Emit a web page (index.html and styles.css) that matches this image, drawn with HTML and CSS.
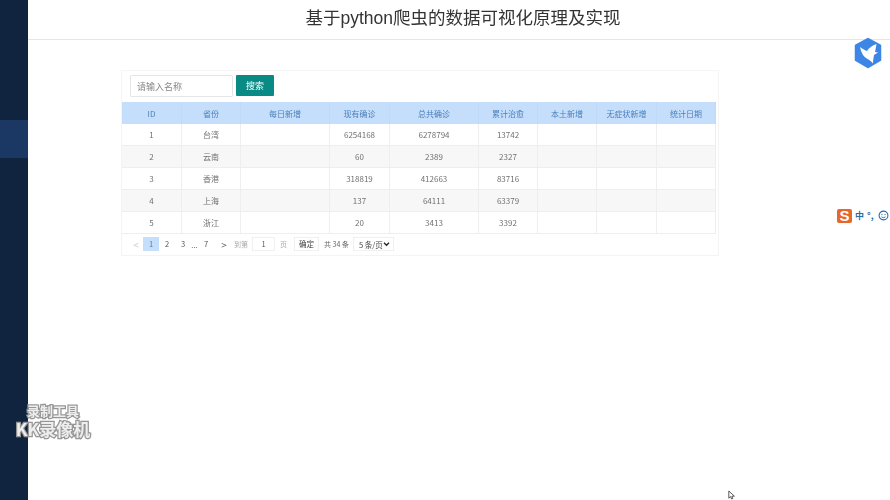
FILE: index.html
```html
<!DOCTYPE html>
<html lang="zh">
<head>
<meta charset="utf-8">
<title>基于python爬虫的数据可视化原理及实现</title>
<link rel="stylesheet" href="styles.css">
</head>
<body>
<div class="app">
  <aside class="sidebar">
    <div class="side-active"></div>
  </aside>
  <main class="main">
    <header class="header"><h1>基于python爬虫的数据可视化原理及实现</h1></header>
    <section class="card">
      <div class="search">
        <input class="search-input" type="text" placeholder="请输入名称">
        <button class="search-btn">搜索</button>
      </div>
      <table class="data">
        <colgroup>
          <col class="c60"><col class="c59"><col class="c89"><col class="c60"><col class="c89"><col class="c59"><col class="c59"><col class="c60"><col class="c59">
        </colgroup>
        <thead>
          <tr><th>ID</th><th>省份</th><th>每日新增</th><th>现有确诊</th><th>总共确诊</th><th>累计治愈</th><th>本土新增</th><th>无症状新增</th><th>统计日期</th></tr>
        </thead>
        <tbody>
          <tr><td>1</td><td>台湾</td><td></td><td>6254168</td><td>6278794</td><td>13742</td><td></td><td></td><td></td></tr>
          <tr><td>2</td><td>云南</td><td></td><td>60</td><td>2389</td><td>2327</td><td></td><td></td><td></td></tr>
          <tr><td>3</td><td>香港</td><td></td><td>318819</td><td>412663</td><td>83716</td><td></td><td></td><td></td></tr>
          <tr><td>4</td><td>上海</td><td></td><td>137</td><td>64111</td><td>63379</td><td></td><td></td><td></td></tr>
          <tr><td>5</td><td>浙江</td><td></td><td>20</td><td>3413</td><td>3392</td><td></td><td></td><td></td></tr>
        </tbody>
      </table>
      <div class="pager">
        <span class="pg-arrow muted">&lt;</span>
        <span class="pg-num active">1</span>
        <span class="pg-num">2</span>
        <span class="pg-num">3</span>
        <span class="pg-dots">...</span>
        <span class="pg-num">7</span>
        <span class="pg-arrow next">&gt;</span>
        <span class="pg-label first">到第</span>
        <span class="pg-box">1</span>
        <span class="pg-label second">页</span>
        <span class="pg-ok">确定</span>
        <span class="pg-total">共 34 条</span>
        <span class="pg-size">5 条/页
          <svg class="pg-chevron" viewBox="0 0 8 6" width="7" height="5" aria-hidden="true"><path d="M1 1 L4 4 L7 1" fill="none" stroke="#222" stroke-width="1.600"/></svg>
        </span>
      </div>
    </section>
  </main>
</div>

<svg class="bird" viewBox="0 0 30 32" width="30" height="32" aria-hidden="true">
  <path d="M15 2 L27 8.500 V23 L15 30 L3 23 V8.500 Z" fill="#3d86e6" stroke="#3d86e6" stroke-width="2.500" stroke-linejoin="round"/>
  <path d="M7 10 C10 12 12 13.500 14 14 C16 11 19 8.500 23.500 7 C23 10 22.500 12.500 22 15 L25 15.500 L21 18 C20.500 21 20 24 20 26.500 C18.500 24.500 16.500 23 14.500 22 C10.500 20 8 15 7 10 Z" fill="#fff"/>
</svg>

<div class="ime">
  <span class="ime-s">S</span><span class="ime-zh">中</span><span class="ime-dot">°,</span>
  <svg class="ime-face" viewBox="0 0 12 12" width="11" height="11" aria-hidden="true">
    <circle cx="6" cy="6" r="4.800" fill="none" stroke="#2b6ca8" stroke-width="1.200"/>
    <circle cx="4.300" cy="5" r=".7" fill="#2b6ca8"/><circle cx="7.700" cy="5" r=".7" fill="#2b6ca8"/>
    <path d="M3.800 7.500 Q6 9.500 8.200 7.500" fill="none" stroke="#2b6ca8"/>
  </svg>
</div>

<div class="watermark">
  <div class="wm-top">录制工具</div>
  <div class="wm-bottom">KK录像机</div>
</div>

<svg class="cursor" viewBox="0 0 10 12" width="8" height="10" aria-hidden="true">
  <path d="M1 1 V10 L3.200 8 L4.500 11 L6 10.400 L4.800 7.500 L8 7.500 Z" fill="#fff" stroke="#333" stroke-width="1"/>
</svg>
</body>
</html>
```
FILE: styles.css
```css
* { box-sizing: border-box; }
html, body { margin: 0; height: 100%; overflow: hidden; background: #fff; }
body { font-family: "Noto Sans CJK SC", "Liberation Sans", sans-serif; color: #666; font-size: 8px; }
.app { display: flex; height: 500px; }
.sidebar { width: 28px; flex: none; background: #10233f; padding-top: 120px; }
.side-active { height: 38px; background: #1b3763; }
.main { flex: 1; min-width: 0; }
.header { height: 40px; border-bottom: 1px solid #e6e6e6; display: flex; justify-content: center; align-items: center; padding: 0 0 3px 8px; }
.header h1 { margin: 0; font-size: 17.500px; font-weight: 400; color: #333; line-height: 24px; font-family: "Liberation Sans", "Noto Sans CJK SC", sans-serif; filter: blur(.3px); }
.card { width: 598px; height: 186px; margin: 30px 0 0 93px; border: 1px solid #f4f4f4; border-top-color: #f6f6f6; filter: blur(.35px); }
.search { display: flex; gap: 3px; padding: 4px 0 0 8px; height: 31px; }
.search-input { width: 103px; height: 22px; border: 1px solid #e6e6e6; padding: 0 6px; font: 9px "Noto Sans CJK SC", sans-serif; color: #666; outline: none; border-radius: 1px; }
.search-input::placeholder { color: #888; }
.search-btn { width: 38px; height: 21px; border: 0; padding: 0; background: #0a8a84; color: #fff; font: 9px "Noto Sans CJK SC", sans-serif; border-radius: 1px; }
.data { width: 594px; table-layout: fixed; border-collapse: separate; border-spacing: 0; }
.c59 { width: 59px; } .c60 { width: 60px; } .c89 { width: 89px; }
.data th { height: 22px; background: #c5defb; color: #4b7fb8; font-weight: 400; font-size: 8px; padding: 0; text-align: center; border-right: 1px solid #bfd9f8; }
.data td { height: 22px; padding: 0; text-align: center; font-size: 8px; color: #707070; border-right: 1px solid #eeeeee; border-bottom: 1px solid #eeeeee; }
.data tbody tr:nth-child(even) td { background: #f7f7f7; }
.pager { display: flex; align-items: center; height: 20px; padding-left: 7px; font-size: 7.500px; color: #555; white-space: nowrap; }
.pg-arrow { width: 14px; text-align: center; font-size: 10px; color: #666; }
.pg-arrow.muted { color: #ccc; }
.pg-arrow.next { margin-left: 3px; }
.pg-num { width: 16px; height: 14px; line-height: 14px; text-align: center; }
.pg-num.active { background: #c5defb; color: #4b7fb8; }
.pg-dots { width: 7px; text-align: center; }
.pg-label { color: #aaa; font-size: 7px; }
.pg-label.first { margin: 0 4px 0 3px; }
.pg-label.second { margin: 0 7px 0 5px; }
.pg-box { width: 23px; height: 14px; line-height: 12px; text-align: center; border: 1px solid #f0f0f0; }
.pg-ok { width: 25px; height: 14px; line-height: 12px; text-align: center; border: 1px solid #f0f0f0; color: #444; }
.pg-total { margin-left: 5px; color: #666; font-size: 7px; width: 24px; }
.pg-size { width: 41px; height: 14px; margin-left: 5px; padding: 0 3px 0 5px; border: 1px solid #f0f0f0; background: #fff; color: #444; display: flex; align-items: center; justify-content: space-between; }
.pg-chevron { flex: none; }
.bird { position: absolute; left: 853px; top: 37px; }
.ime { position: absolute; left: 837px; top: 208px; width: 53px; height: 15px; display: flex; align-items: center; background: #fff; font-size: 9px; color: #2b6ca8; font-weight: 700; }
.ime-s { width: 15px; height: 14px; background: #e8662a; color: #fff; font: 700 15px/14px "Liberation Sans", sans-serif; text-align: center; border-radius: 2px; }
.ime-zh { margin-left: 3px; }
.ime-dot { margin-left: 3px; width: 10px; }
.ime-face { margin-left: 1px; }
.watermark { position: absolute; left: 13px; top: 402px; width: 80px; text-align: center; color: #eeeeee; font-weight: 700; -webkit-text-stroke: 2.500px #969696; paint-order: stroke fill; font-family: "Noto Sans CJK SC", sans-serif; filter: blur(.4px); }
.wm-top { font-size: 13px; line-height: 18px; }
.wm-bottom { font-size: 17px; line-height: 18px; white-space: nowrap; }
.cursor { position: absolute; left: 728px; top: 490px; }
```
